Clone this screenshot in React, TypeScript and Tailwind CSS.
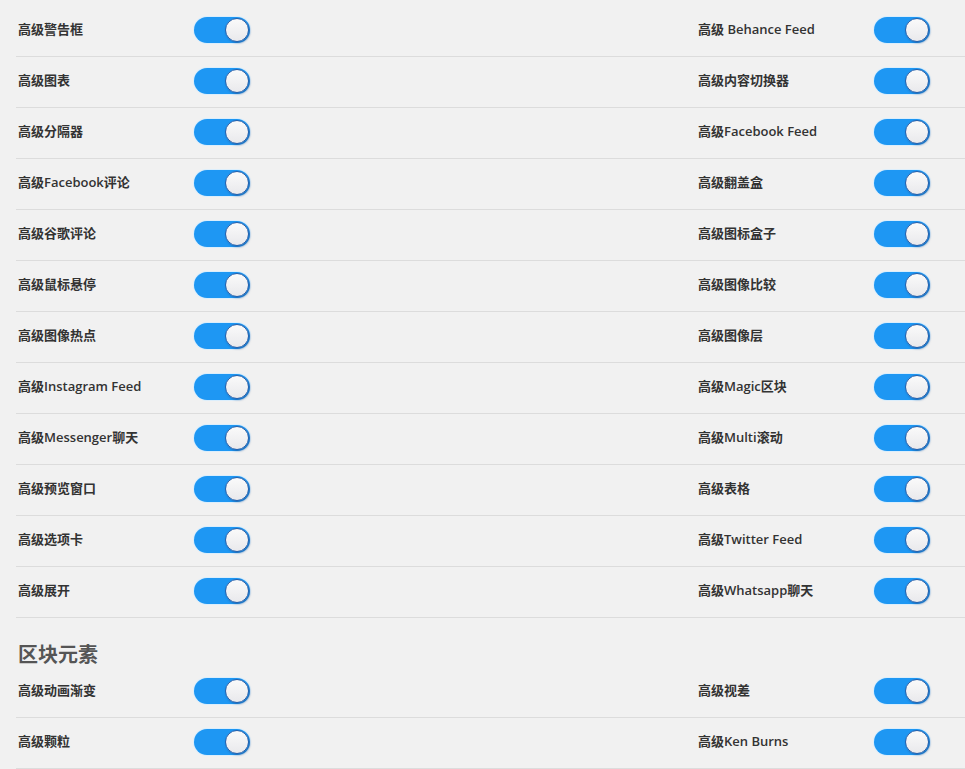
import React from "react";

const rows: [string, string][] = [
  ["高级警告框", "高级 Behance Feed"],
  ["高级图表", "高级内容切换器"],
  ["高级分隔器", "高级Facebook Feed"],
  ["高级Facebook评论", "高级翻盖盒"],
  ["高级谷歌评论", "高级图标盒子"],
  ["高级鼠标悬停", "高级图像比较"],
  ["高级图像热点", "高级图像层"],
  ["高级Instagram Feed", "高级Magic区块"],
  ["高级Messenger聊天", "高级Multi滚动"],
  ["高级预览窗口", "高级表格"],
  ["高级选项卡", "高级Twitter Feed"],
  ["高级展开", "高级Whatsapp聊天"],
];

const rows2: [string, string][] = [
  ["高级动画渐变", "高级视差"],
  ["高级颗粒", "高级Ken Burns"],
];

function Toggle() {
  return (
    <div className="relative w-[56px] h-[26px] rounded-full bg-[#1e97f3] shadow-[0_0_0_1px_#dbeefc]">
      <div className="absolute right-[1px] top-[1px] w-[24px] h-[24px] rounded-full bg-gradient-to-b from-[#fafafa] to-[#e9e9ec] border-[1.5px] border-[#2a5fa8] shadow-[1px_1px_2px_rgba(20,60,120,0.5)]" />
    </div>
  );
}

function Item({ label }: { label: string }) {
  return (
    <div className="flex items-center">
      <span className="w-[176px] text-[13px] font-semibold text-[#333] whitespace-nowrap">{label}</span>
      <Toggle />
    </div>
  );
}

function Row({ pair }: { pair: [string, string] }) {
  return (
    <div className="h-[51px] border-b border-[#dcdcdc] flex items-center justify-between pl-[2px] pr-[35px] pb-[3px]">
      <Item label={pair[0]} />
      <Item label={pair[1]} />
    </div>
  );
}

export default function App() {
  return (
    <div
      className="w-[965px] h-[769px] bg-[#f1f1f1] overflow-hidden pt-[6px] pl-[16px]"
      style={{ fontFamily: '"Open Sans", "Noto Sans CJK SC", sans-serif' }}
    >
      {rows.map((r, i) => (
        <Row key={i} pair={r} />
      ))}
      <div className="pt-[25px] pl-[2px] h-[49px]">
        <h2 className="text-[20px] leading-[24px] font-bold text-[#555]">区块元素</h2>
      </div>
      {rows2.map((r, i) => (
        <Row key={i} pair={r} />
      ))}
    </div>
  );
}
